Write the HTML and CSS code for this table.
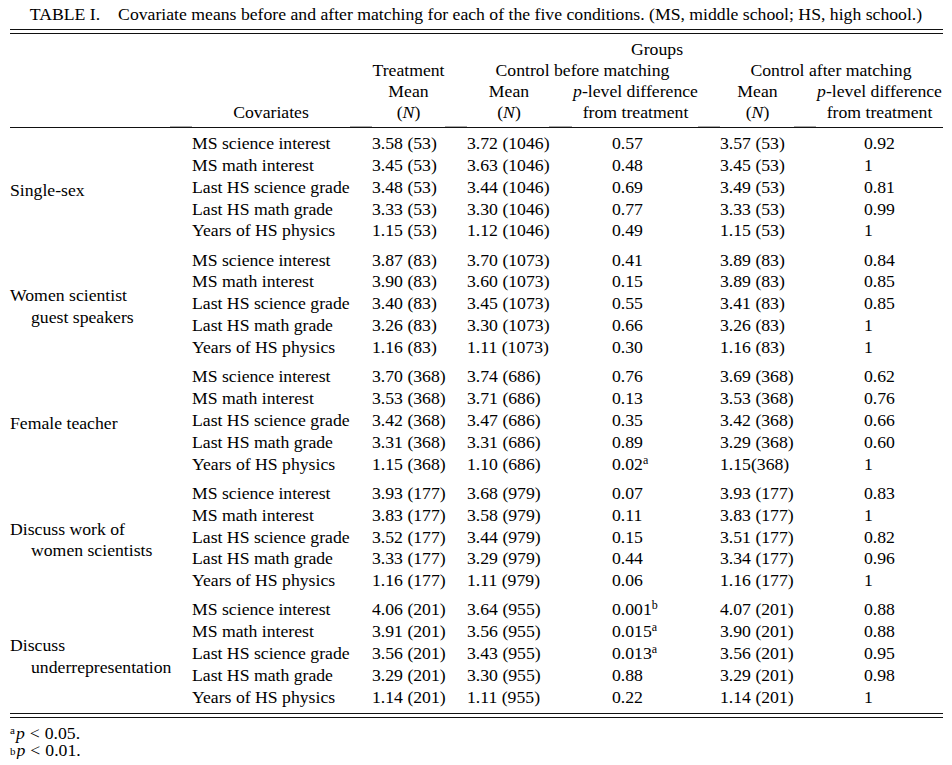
FILE: index.html
```html
<!DOCTYPE html>
<html lang="en">
<head>
<meta charset="utf-8">
<title>Table I</title>
<link rel="stylesheet" href="styles.css">
</head>
<body>
<div class="page">
  <p class="caption">TABLE I.<span class="caption-gap"></span>Covariate means before and after matching for each of the five conditions. (MS, middle school; HS, high school.)</p>
  <div class="double-rule"></div>

  <div class="grid head">
    <div class="h c3-7 pr1">Groups</div>

    <div class="h c3 pr">Treatment</div>
    <div class="h c4-5 pr">Control before matching</div>
    <div class="h c6-7 pr1">Control after matching</div>

    <div class="h c3 pr">Mean</div>
    <div class="h c4 pr">Mean</div>
    <div class="h c5 pr"><i>p</i>-level difference</div>
    <div class="h c6 pr">Mean</div>
    <div class="h c7 pr1"><i>p</i>-level difference</div>

    <div class="h c2 pr">Covariates</div>
    <div class="h c3 pr">(<i>N</i>)</div>
    <div class="h c4 pr">(<i>N</i>)</div>
    <div class="h c5 pr">from treatment</div>
    <div class="h c6 pr">(<i>N</i>)</div>
    <div class="h c7 pr1">from treatment</div>
  </div>

  <div class="grid group first">
    <div class="label"><span>Single-sex</span></div>
    <div>MS science interest</div><div>3.58 (53)</div><div>3.72 (1046)</div><div class="p1">0.57</div><div>3.57 (53)</div><div class="p2">0.92</div>
    <div>MS math interest</div><div>3.45 (53)</div><div>3.63 (1046)</div><div class="p1">0.48</div><div>3.45 (53)</div><div class="p2">1</div>
    <div>Last HS science grade</div><div>3.48 (53)</div><div>3.44 (1046)</div><div class="p1">0.69</div><div>3.49 (53)</div><div class="p2">0.81</div>
    <div>Last HS math grade</div><div>3.33 (53)</div><div>3.30 (1046)</div><div class="p1">0.77</div><div>3.33 (53)</div><div class="p2">0.99</div>
    <div>Years of HS physics</div><div>1.15 (53)</div><div>1.12 (1046)</div><div class="p1">0.49</div><div>1.15 (53)</div><div class="p2">1</div>
  </div>

  <div class="grid group">
    <div class="label"><span>Women scientist</span><span class="indent">guest speakers</span></div>
    <div>MS science interest</div><div>3.87 (83)</div><div>3.70 (1073)</div><div class="p1">0.41</div><div>3.89 (83)</div><div class="p2">0.84</div>
    <div>MS math interest</div><div>3.90 (83)</div><div>3.60 (1073)</div><div class="p1">0.15</div><div>3.89 (83)</div><div class="p2">0.85</div>
    <div>Last HS science grade</div><div>3.40 (83)</div><div>3.45 (1073)</div><div class="p1">0.55</div><div>3.41 (83)</div><div class="p2">0.85</div>
    <div>Last HS math grade</div><div>3.26 (83)</div><div>3.30 (1073)</div><div class="p1">0.66</div><div>3.26 (83)</div><div class="p2">1</div>
    <div>Years of HS physics</div><div>1.16 (83)</div><div>1.11 (1073)</div><div class="p1">0.30</div><div>1.16 (83)</div><div class="p2">1</div>
  </div>

  <div class="grid group">
    <div class="label"><span>Female teacher</span></div>
    <div>MS science interest</div><div>3.70 (368)</div><div>3.74 (686)</div><div class="p1">0.76</div><div>3.69 (368)</div><div class="p2">0.62</div>
    <div>MS math interest</div><div>3.53 (368)</div><div>3.71 (686)</div><div class="p1">0.13</div><div>3.53 (368)</div><div class="p2">0.76</div>
    <div>Last HS science grade</div><div>3.42 (368)</div><div>3.47 (686)</div><div class="p1">0.35</div><div>3.42 (368)</div><div class="p2">0.66</div>
    <div>Last HS math grade</div><div>3.31 (368)</div><div>3.31 (686)</div><div class="p1">0.89</div><div>3.29 (368)</div><div class="p2">0.60</div>
    <div>Years of HS physics</div><div>1.15 (368)</div><div>1.10 (686)</div><div class="p1">0.02<sup>a</sup></div><div>1.15(368)</div><div class="p2">1</div>
  </div>

  <div class="grid group">
    <div class="label"><span>Discuss work of</span><span class="indent">women scientists</span></div>
    <div>MS science interest</div><div>3.93 (177)</div><div>3.68 (979)</div><div class="p1">0.07</div><div>3.93 (177)</div><div class="p2">0.83</div>
    <div>MS math interest</div><div>3.83 (177)</div><div>3.58 (979)</div><div class="p1">0.11</div><div>3.83 (177)</div><div class="p2">1</div>
    <div>Last HS science grade</div><div>3.52 (177)</div><div>3.44 (979)</div><div class="p1">0.15</div><div>3.51 (177)</div><div class="p2">0.82</div>
    <div>Last HS math grade</div><div>3.33 (177)</div><div>3.29 (979)</div><div class="p1">0.44</div><div>3.34 (177)</div><div class="p2">0.96</div>
    <div>Years of HS physics</div><div>1.16 (177)</div><div>1.11 (979)</div><div class="p1">0.06</div><div>1.16 (177)</div><div class="p2">1</div>
  </div>

  <div class="grid group">
    <div class="label"><span>Discuss</span><span class="indent">underrepresentation</span></div>
    <div>MS science interest</div><div>4.06 (201)</div><div>3.64 (955)</div><div class="p1">0.001<sup>b</sup></div><div>4.07 (201)</div><div class="p2">0.88</div>
    <div>MS math interest</div><div>3.91 (201)</div><div>3.56 (955)</div><div class="p1">0.015<sup>a</sup></div><div>3.90 (201)</div><div class="p2">0.88</div>
    <div>Last HS science grade</div><div>3.56 (201)</div><div>3.43 (955)</div><div class="p1">0.013<sup>a</sup></div><div>3.56 (201)</div><div class="p2">0.95</div>
    <div>Last HS math grade</div><div>3.29 (201)</div><div>3.30 (955)</div><div class="p1">0.88</div><div>3.29 (201)</div><div class="p2">0.98</div>
    <div>Years of HS physics</div><div>1.14 (201)</div><div>1.11 (955)</div><div class="p1">0.22</div><div>1.14 (201)</div><div class="p2">1</div>
  </div>

  <div class="double-rule bottom"></div>

  <div class="notes">
    <div class="note"><sup class="fa">a</sup><i>p</i><span class="rel">&lt;</span>0.05.</div>
    <div class="note"><sup class="fb">b</sup><i>p</i><span class="rel">&lt;</span>0.01.</div>
  </div>
</div>
</body>
</html>
```

FILE: styles.css
```css
html, body {
  margin: 0;
  padding: 0;
  background: #fff;
}

body {
  font-family: "Liberation Serif", "Times New Roman", serif;
  font-size: 17.7px;
  color: #000;
}

.page {
  width: 933px;
  margin-left: 10px;
}

.caption {
  margin: 0;
  width: 952px;
  margin-left: -10px;
  text-align: center;
  line-height: 20px;
  padding-top: 4px;
  height: 20px;
  white-space: nowrap;
}

.caption-gap {
  display: inline-block;
  width: 18px;
}

.double-rule {
  margin-top: 5px;
  height: 3px;
  border-top: 1px solid #111;
  border-bottom: 1px solid #111;
}

.double-rule.bottom {
  margin-top: 4px;
}

.grid {
  display: grid;
  grid-template-columns: 182px 180px 95px 106px 147px 97px 126px;
}

.head {
  position: relative;
  padding-top: 5px;
  padding-bottom: 4px;
  border-bottom: 1px solid #111;
  grid-auto-rows: 21px;
  line-height: 21px;
}

/* faint heavier marks on the rule between column runs */
.head::after {
  content: "";
  position: absolute;
  left: 0;
  right: 0;
  bottom: 0;
  height: 1px;
  background:
    linear-gradient(#aaa, #aaa) 160px 0 / 22px 1px no-repeat,
    linear-gradient(#aaa, #aaa) 340px 0 / 22px 1px no-repeat,
    linear-gradient(#aaa, #aaa) 435px 0 / 22px 1px no-repeat,
    linear-gradient(#aaa, #aaa) 539px 0 / 23px 1px no-repeat,
    linear-gradient(#aaa, #aaa) 688px 0 / 22px 1px no-repeat,
    linear-gradient(#aaa, #aaa) 784px 0 / 22px 1px no-repeat;
}

.h {
  text-align: center;
  white-space: nowrap;
}

.pr { padding-right: 22px; }
.pr1 { padding-right: 1px; }

.c2 { grid-column: 2; }
.c3 { grid-column: 3; }
.c4 { grid-column: 4; }
.c5 { grid-column: 5; }
.c6 { grid-column: 6; }
.c7 { grid-column: 7; }
.c3-7 { grid-column: 3 / 8; }
.c4-5 { grid-column: 4 / 6; }
.c6-7 { grid-column: 6 / 8; }

.head .h:nth-child(1) { grid-row: 1; }
.head .h:nth-child(n+2):nth-child(-n+4) { grid-row: 2; }
.head .h:nth-child(n+5):nth-child(-n+9) { grid-row: 3; }
.head .h:nth-child(n+10) { grid-row: 4; }

.group {
  grid-auto-rows: 21.85px;
  line-height: 21.85px;
  padding-top: 7.4px;
  white-space: nowrap;
}

.group.first {
  padding-top: 5px;
}

.label {
  grid-column: 1;
  grid-row: 1 / 6;
  align-self: center;
  padding-top: 6px;
  display: flex;
  flex-direction: column;
  line-height: 21.85px;
}

.label .indent {
  padding-left: 21px;
}

.p1 { padding-left: 39px; }
.p2 { padding-left: 47px; }

sup {
  font-size: 12px;
  line-height: 0;
  vertical-align: 6px;
}

.notes {
  padding-top: 7px;
  line-height: 17px;
}

.note {
  height: 17px;
}

.notes sup {
  font-size: 11px;
  margin-right: 1px;
}

.notes .fa {
  vertical-align: 5px;
}

.notes .fb {
  vertical-align: 1px;
}

.rel {
  padding: 0 5px;
}
```
